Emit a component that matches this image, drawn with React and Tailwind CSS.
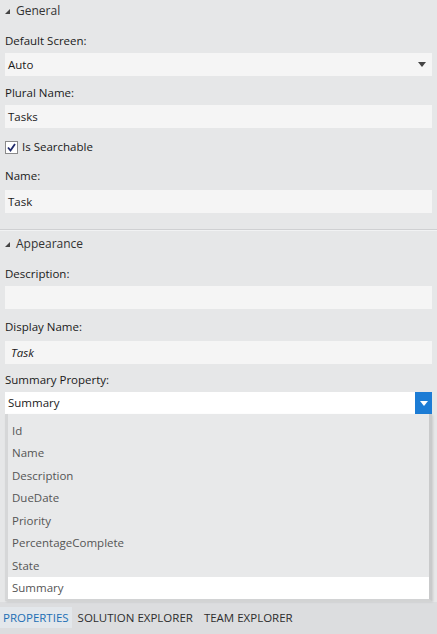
import React from "react";

const font = { fontFamily: '"Open Sans", "Noto Sans", sans-serif' };

function Caret({ className = "" }) {
  return (
    <svg width="5" height="5" viewBox="0 0 5 5" className={className}>
      <polygon points="5,0 5,5 0,5" fill="#444" />
    </svg>
  );
}

function DownArrow({ color = "#444" }) {
  return (
    <svg width="8" height="5" viewBox="0 0 8 5">
      <polygon points="0,0 8,0 4,5" fill={color} />
    </svg>
  );
}

function Section({ title }) {
  return (
    <div className="flex h-[21px] items-center gap-[6px] pl-[5px] text-[12px] text-[#333]">
      <Caret className="mt-[2px]" />
      <span>{title}</span>
    </div>
  );
}

function Label({ children, className = "" }) {
  return (
    <div className={"flex h-[20px] items-center px-[5px] text-[11.5px] text-[#1a1a1a] " + className}>
      {children}
    </div>
  );
}

function Field({ value, italic, className = "", arrow }) {
  return (
    <div
      className={
        "mx-[5px] flex h-[23px] items-center justify-between bg-[#f5f5f5] px-[3px] text-[11.5px] text-[#1a1a1a] " +
        (italic ? "italic pl-[6px] " : "") +
        className
      }
    >
      <span>{value}</span>
      {arrow && (
        <span className="mr-[3px]">
          <DownArrow />
        </span>
      )}
    </div>
  );
}

const options = [
  "Id",
  "Name",
  "Description",
  "DueDate",
  "Priority",
  "PercentageComplete",
  "State",
  "Summary",
];

export default function App() {
  return (
    <div className="flex h-[634px] w-[437px] flex-col overflow-hidden bg-[#e6e7e8]" style={font}>
      <Section title="General" />

      <Label className="mt-[10px]">Default Screen:</Label>
      <Field value="Auto" arrow className="mt-[2px]" />

      <Label className="mt-[7px]">Plural Name:</Label>
      <Field value="Tasks" className="mt-[2px]" />

      <div className="mt-[9px] flex h-[20px] items-center gap-[4px] pl-[5px] text-[11.5px] text-[#1a1a1a]">
        <span className="flex h-[13px] w-[13px] items-center justify-center border border-[#8a8a8a] bg-white">
          <svg width="9" height="9" viewBox="0 0 9 9">
            <path d="M1 4.5 L3.5 7.5 L8 1" fill="none" stroke="#1f2a6b" strokeWidth="1.8" />
          </svg>
        </span>
        <span>Is Searchable</span>
      </div>

      <Label className="mt-[9px]">Name:</Label>
      <Field value="Task" className="mt-[4px]" />

      <div className="mt-[16px] h-[1px] bg-[#cfd0d2]" />
      <div className="h-[1px] bg-[#f1f2f3]" />

      <div className="mt-[2px]">
        <Section title="Appearance" />
      </div>

      <Label className="mt-[10px]">Description:</Label>
      <Field value="" className="mt-[2px]" />

      <Label className="mt-[8px]">Display Name:</Label>
      <Field value="Task" italic className="mt-[4px]" />

      <Label className="mt-[6px]">Summary Property:</Label>
      <div className="mx-[5px] mt-[2px] flex h-[22px] items-center justify-between bg-white pl-[3px] text-[11.5px] text-[#1a1a1a]">
        <span>Summary</span>
        <span className="flex h-[23px] w-[17px] items-center justify-center bg-[#1c7cd5]">
          <DownArrow color="#ffffff" />
        </span>
      </div>

      <div className="relative mx-[5px] flex flex-col border-x-[3px] border-b-[2px] border-l-[#d6d7d8] border-r-[#c9cacb] border-b-[#d2d3d4] bg-[#e8e9ea] pt-[5px] shadow-[1px_1px_2px_rgba(0,0,0,0.12)]">
        {options.map((o, i) => (
          <div
            key={o}
            className={
              "flex h-[22.5px] items-center pl-[4px] text-[11.5px] text-[#555] " +
              (i === options.length - 1 ? "bg-white text-[#1a1a1a]" : "")
            }
          >
            {o}
          </div>
        ))}
      </div>

      <div className="mt-[1px] flex flex-1 items-start bg-[#dcdddf] pt-[5px] text-[11.5px] text-[#2d2d2d]">
        <div className="flex h-[21px] items-center bg-[#e3e7eb] px-[3px] text-[#1c6fb5]">PROPERTIES</div>
        <div className="ml-[6px] flex h-[21px] items-center">SOLUTION EXPLORER</div>
        <div className="ml-[11px] flex h-[21px] items-center">TEAM EXPLORER</div>
      </div>
    </div>
  );
}
